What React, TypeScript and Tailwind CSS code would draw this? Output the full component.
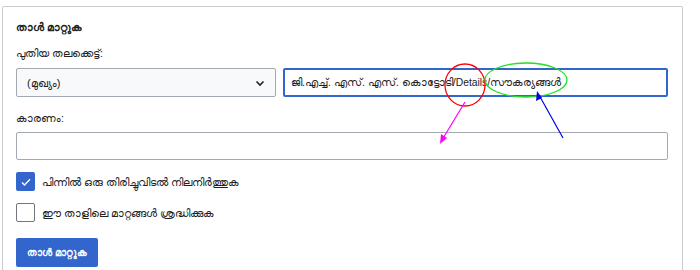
import React from "react";

export default function App() {
  return (
    <div className="relative w-[700px] h-[270px] bg-white overflow-hidden text-[11px] text-[#202122]" style={{ fontFamily: '"Liberation Sans", "Noto Sans", Arial, sans-serif' }}>
      <div className="ml-[2px] mt-[6px] w-[681px] h-[300px] border border-[#c8ccd1] rounded-[2px] px-[13px] pt-[12px]">
        <div className="h-[16px] leading-[16px] font-bold text-[11px] whitespace-nowrap">താൾ മാറ്റുക</div>
        <div className="mt-[10px] h-[16px] leading-[16px] text-[10.5px] whitespace-nowrap">പുതിയ തലക്കെട്ട്:</div>
        <div className="mt-[7px] flex gap-[7px] h-[29px]">
          <div className="w-[260px] h-[29px] bg-[#f8f9fa] border border-[#a2a9b1] rounded-[2px] flex items-center justify-between pl-[10px] pr-[9px]">
            <span className="leading-[16px]">(മുഖ്യം)</span>
            <svg width="12" height="12" viewBox="0 0 12 12" fill="none" stroke="#202122" strokeWidth="1.6"><path d="M2.5 4.5l3.5 3.5 3.5-3.5" /></svg>
          </div>
          <div className="w-[385px] h-[29px] border-2 border-[#3366cc] rounded-[2px] flex items-center pl-[6px]">
            <span className="leading-[16px] text-[10.7px] whitespace-nowrap">ജി.എച്ച്. എസ്. എസ്. കൊട്ടോടി/<span className="text-[10.3px]">Details</span>/സൗകര്യങ്ങൾ</span>
          </div>
        </div>
        <div className="mt-[13px] h-[16px] leading-[16px] text-[10.5px] whitespace-nowrap">കാരണം:</div>
        <div className="mt-[6px] w-[652px] h-[28px] border border-[#a2a9b1] rounded-[2px]"></div>
        <div className="mt-[12px] h-[19px] flex items-center gap-[7px]">
          <div className="w-[19px] h-[19px] bg-[#3366cc] rounded-[2px] flex items-center justify-center">
            <svg width="12" height="12" viewBox="0 0 12 12" fill="none" stroke="white" strokeWidth="1.3"><path d="M2 6.5l2.5 2.5L10 3.2" /></svg>
          </div>
          <span className="leading-[16px] whitespace-nowrap">പിന്നിൽ ഒരു തിരിച്ചുവിടൽ നിലനിർത്തുക</span>
        </div>
        <div className="mt-[12px] h-[19px] flex items-center gap-[7px]">
          <div className="w-[19px] h-[19px] border border-[#72777d] rounded-[2px] bg-white"></div>
          <span className="leading-[16px] whitespace-nowrap">ഈ താളിലെ മാറ്റങ്ങൾ ശ്രദ്ധിക്കുക</span>
        </div>
        <div className="mt-[16px] w-[82px] h-[29px] bg-[#3366cc] rounded-[2px] flex items-center justify-center text-white font-bold text-[10px] leading-[16px] whitespace-nowrap">താൾ മാറ്റുക</div>
      </div>
      <svg className="absolute left-0 top-0" width="700" height="270" viewBox="0 0 700 270">
        <ellipse cx="465" cy="85" rx="20" ry="21" fill="none" stroke="#ff0000" strokeWidth="1.3" />
        <ellipse cx="526" cy="80" rx="41" ry="17" fill="none" stroke="#22e022" strokeWidth="1.3" />
        <line x1="465" y1="102" x2="442" y2="140" stroke="#ff00ff" strokeWidth="1.2" />
        <polygon points="440,144 441,134 447,138" fill="#ff00ff" />
        <line x1="563" y1="138" x2="539" y2="95" stroke="#0000ee" strokeWidth="1.2" />
        <polygon points="537,91 536,101 542,98" fill="#0000ee" />
      </svg>
    </div>
  );
}
